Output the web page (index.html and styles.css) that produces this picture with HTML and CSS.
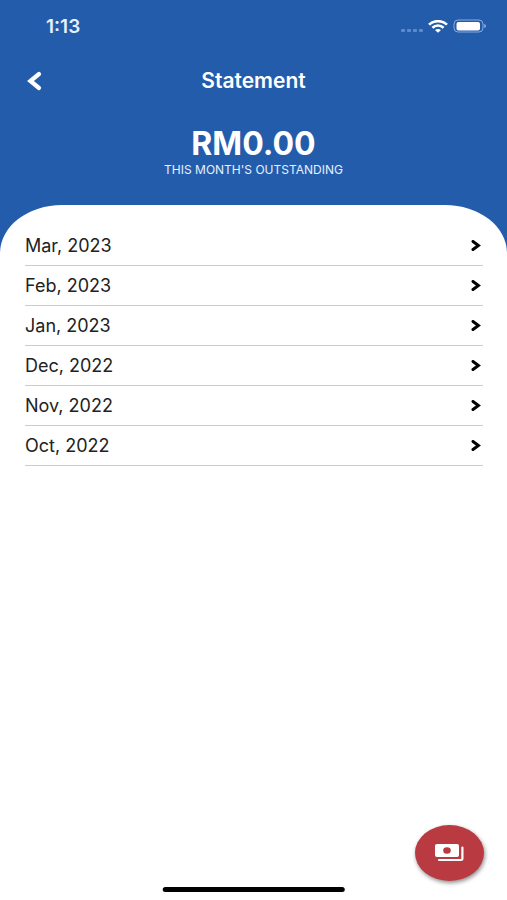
FILE: index.html
```html
<!DOCTYPE html>
<html lang="en">
<head>
<meta charset="utf-8">
<meta name="viewport" content="width=device-width, initial-scale=1">
<title>Statement</title>
<link rel="stylesheet" href="styles.css">
</head>
<body>
<div class="status">
  <span class="time">1:13</span>
  <div class="indicators">
    <span class="dots"><i></i><i></i><i></i><i></i></span>
    <svg class="wifi" viewBox="0 0 20 13" aria-hidden="true">
      <g fill="none" stroke="#fff" stroke-width="2.6">
        <path d="M1 4.6C6 0 14 0 19 4.6"/>
        <path d="M4.4 7.8C7.6 4.8 12.4 4.8 15.6 7.8"/>
      </g>
      <path d="M7 10.1C8.8 8.5 11.2 8.5 13 10.1L10 12.8Z" fill="#fff"/>
    </svg>
    <svg class="battery" viewBox="0 0 34 14" aria-hidden="true">
      <rect x="1" y="1" width="29" height="12" rx="4" fill="none" stroke="#86a9de"/>
      <rect x="3.5" y="3" width="23.5" height="8.5" rx="2" fill="#fff"/>
      <path d="M31.2 5C33.6 5.5 33.6 8.5 31.2 9Z" fill="#86a9de"/>
    </svg>
  </div>
</div>
<header class="bar">
  <button class="back" type="button" aria-label="Back">
    <svg viewBox="0 0 16 20" aria-hidden="true"><path d="M13 3L4.4 10l8.6 7" fill="none" stroke="#fff" stroke-width="4.2" stroke-linecap="round"/></svg>
  </button>
  <h1>Statement</h1>
</header>
<section class="summary">
  <p class="amount">RM0.00</p>
  <p class="caption">THIS MONTH'S OUTSTANDING</p>
</section>
<main class="sheet">
  <ul class="months">
    <li><a href="#mar">Mar, 2023<svg viewBox="0 0 10 12" aria-hidden="true"><path d="M2 1.5l5.4 4L2 9.5"/></svg></a></li>
    <li><a href="#feb">Feb, 2023<svg viewBox="0 0 10 12" aria-hidden="true"><path d="M2 1.5l5.4 4L2 9.5"/></svg></a></li>
    <li><a href="#jan">Jan, 2023<svg viewBox="0 0 10 12" aria-hidden="true"><path d="M2 1.5l5.4 4L2 9.5"/></svg></a></li>
    <li><a href="#dec">Dec, 2022<svg viewBox="0 0 10 12" aria-hidden="true"><path d="M2 1.5l5.4 4L2 9.5"/></svg></a></li>
    <li><a href="#nov">Nov, 2022<svg viewBox="0 0 10 12" aria-hidden="true"><path d="M2 1.5l5.4 4L2 9.5"/></svg></a></li>
    <li><a href="#oct">Oct, 2022<svg viewBox="0 0 10 12" aria-hidden="true"><path d="M2 1.5l5.4 4L2 9.5"/></svg></a></li>
  </ul>
</main>
<button class="pay" type="button" aria-label="Pay">
  <svg viewBox="0 0 32 20" aria-hidden="true">
    <rect x="1" y="1" width="24" height="13" rx="2" fill="#fff"/>
    <ellipse cx="13" cy="7.5" rx="3.8" ry="3.2" fill="#b93a41"/>
    <path d="M28.4 4.5V16Q28.4 17 27 17H5" fill="none" stroke="#fff" stroke-width="2.2" stroke-linecap="round"/>
  </svg>
</button>
<div class="home"></div>
</body>
</html>
```
FILE: styles.css
```css
* {
  box-sizing: border-box;
}

body {
  display: flex;
  flex-direction: column;
  min-height: 100vh;
  margin: 0;
  background: #245cac;
  color: #222;
  font-family: Inter, "Liberation Sans", sans-serif;
}

h1, p, ul {
  margin: 0;
  padding: 0;
}

button {
  padding: 0;
  border: 0;
  background: none;
}

svg {
  display: block;
}

.status {
  display: flex;
  align-items: center;
  justify-content: space-between;
  height: 52px;
  padding: 0 20px 0 46px;
  color: #e6f0ff;
}

.time {
  font-size: 19px;
  font-weight: 600;
}

.indicators {
  display: flex;
  align-items: center;
  gap: 5px;
}

.dots {
  display: flex;
  gap: 2px;
  padding-top: 8px;
}

.dots i {
  width: 4px;
  height: 3px;
  border-radius: 1px;
  background: #5f8bcb;
}

.wifi {
  width: 20px;
  height: 13px;
}

.battery {
  width: 34px;
  height: 14px;
}

.bar {
  display: grid;
  grid-template-columns: 36px 1fr 36px;
  align-items: center;
  height: 58px;
  padding: 0 16px;
  color: #fff;
  text-align: center;
}

.back {
  display: grid;
  place-items: center;
  height: 36px;
}

.back svg {
  width: 16px;
  height: 20px;
}

h1 {
  font-size: 21px;
  font-weight: 600;
  line-height: 24px;
}

.summary {
  height: 95px;
  padding-top: 14px;
  color: #fff;
  text-align: center;
}

.amount {
  font-size: 32px;
  font-weight: 700;
  line-height: 40px;
}

.caption {
  color: #e6f0ff;
  font-size: 12px;
  line-height: 12px;
}

.sheet {
  flex: 1;
  padding: 21px 24px 100px 25px;
  border-radius: 62px 62px 0 0 / 48px 48px 0 0;
  background: #fff;
}

.months {
  list-style: none;
}

.months a {
  display: flex;
  align-items: center;
  justify-content: space-between;
  height: 40px;
  padding-right: 2px;
  border-bottom: 1px solid #ccc;
  color: inherit;
  font-size: 18px;
  text-decoration: none;
}

.months svg {
  width: 10px;
  height: 12px;
  fill: none;
  stroke: #000;
  stroke-width: 3;
  stroke-linecap: round;
}

.pay {
  position: fixed;
  right: 23px;
  bottom: 19px;
  display: grid;
  place-items: center;
  width: 69px;
  height: 56px;
  border-radius: 50%;
  background: #b93a41;
  box-shadow: 1px 2px 4px rgba(0, 0, 0, 0.45);
}

.pay svg {
  width: 32px;
  height: 20px;
}

.home {
  position: fixed;
  bottom: 8px;
  left: 50%;
  width: 36%;
  height: 5px;
  border-radius: 3px;
  background: #000;
  transform: translateX(-50%);
}
```
